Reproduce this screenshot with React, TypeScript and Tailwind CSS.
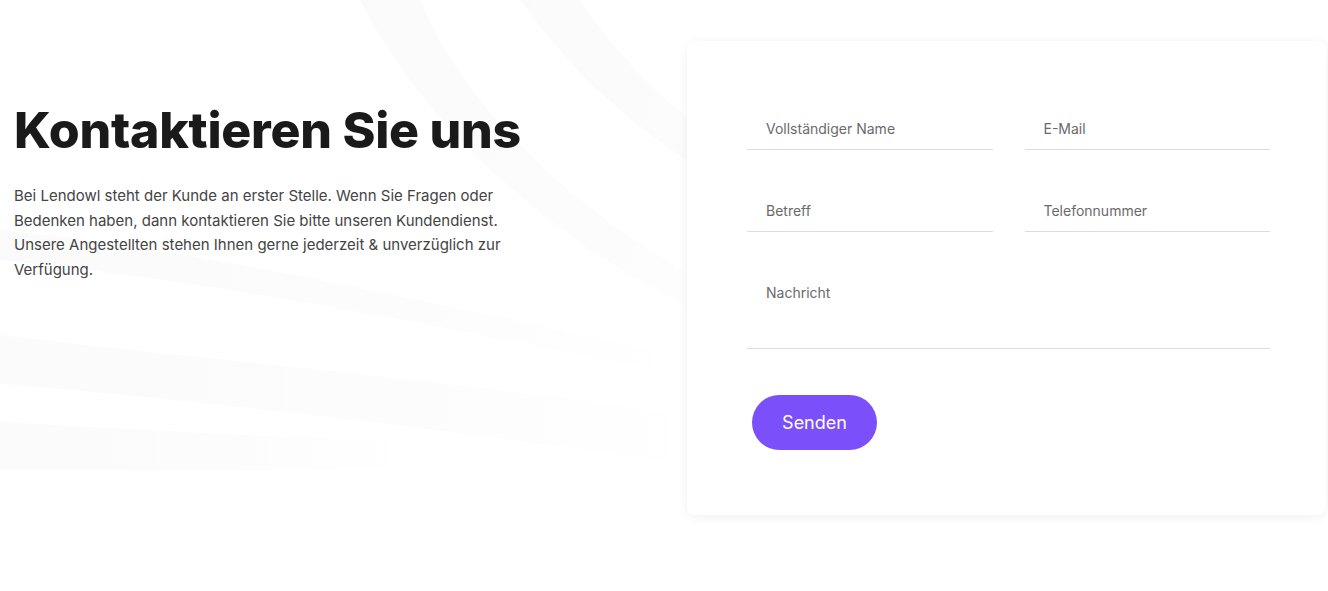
import React from 'react';

function Swooshes() {
  return (
    <svg
      className="pointer-events-none absolute inset-0 h-full w-full"
      viewBox="0 0 1328 591"
      preserveAspectRatio="none"
      aria-hidden="true"
    >
      <defs>
        <linearGradient id="fade" x1="0" y1="0" x2="1" y2="0">
          <stop offset="0" stopColor="#000" stopOpacity="0.018" />
          <stop offset="0.6" stopColor="#000" stopOpacity="0.012" />
          <stop offset="1" stopColor="#000" stopOpacity="0" />
        </linearGradient>
      </defs>
      <path d="M-40 330 C 200 360, 460 380, 720 420 L 720 470 C 460 430, 200 400, -40 380 Z" fill="url(#fade)" />
      <path d="M-40 420 C 160 430, 300 440, 420 440 L 420 470 C 300 470, 160 470, -40 470 Z" fill="url(#fade)" />
      <path d="M360 0 C 420 120, 560 260, 760 340 L 780 320 C 600 240, 470 120, 420 0 Z" fill="url(#fade)" />
      <path d="M520 0 C 600 110, 700 190, 900 260 L 900 230 C 730 170, 640 90, 580 0 Z" fill="url(#fade)" />
      <path d="M0 230 C 200 250, 420 300, 700 360 L 700 380 C 420 320, 200 280, 0 260 Z" fill="url(#fade)" />
    </svg>
  );
}

function Field({ placeholder }: { placeholder: string }) {
  return (
    <input
      type="text"
      placeholder={placeholder}
      className="h-[42px] w-full border-b border-[#dcdcdc] bg-transparent px-[19px] text-[14px] text-[#333] outline-none placeholder:text-[#6a6a6a]"
    />
  );
}

export default function App() {
  return (
    <div
      className="relative min-h-[591px] w-full overflow-hidden bg-white"
      style={{ fontFamily: 'Inter, "Noto Sans", sans-serif' }}
    >
      <Swooshes />
      <div className="relative flex items-start justify-between pr-[2px]">
        {/* Left intro */}
        <div className="w-[530px] pl-[14px] pt-[98px]">
          <h1 className="text-[50px] font-extrabold leading-[64px] tracking-[-0.25px] text-[#1a1a1a]">
            Kontaktieren Sie uns
          </h1>
          <p className="mt-[22px] max-w-[505px] text-[15px] leading-[24.5px] text-[#444]">
            Bei Lendowl steht der Kunde an erster Stelle. Wenn Sie Fragen oder Bedenken haben, dann
            kontaktieren Sie bitte unseren Kundendienst. Unsere Angestellten stehen Ihnen gerne
            jederzeit &amp; unverzüglich zur Verfügung.
          </p>
        </div>

        {/* Form card */}
        <form className="mt-[41px] w-[639px] rounded-[8px] bg-white pb-[65px] pl-[60px] pr-[56px] pt-[67px] shadow-[0_2px_12px_rgba(0,0,0,0.06)]">
          <div className="grid grid-cols-2 gap-x-[32px] gap-y-[40px]">
            <Field placeholder="Vollständiger Name" />
            <Field placeholder="E-Mail" />
            <Field placeholder="Betreff" />
            <Field placeholder="Telefonnummer" />
            <textarea
              placeholder="Nachricht"
              className="col-span-2 h-[77px] w-full resize-none border-b border-[#dcdcdc] bg-transparent px-[19px] pt-[11px] text-[14px] leading-[20px] text-[#333] outline-none placeholder:text-[#6a6a6a]"
            />
          </div>
          <button
            type="button"
            className="ml-[5px] mt-[46px] h-[55px] w-[125px] rounded-full bg-[#7b4ffa] text-[18px] text-white"
          >
            Senden
          </button>
        </form>
      </div>
    </div>
  );
}
